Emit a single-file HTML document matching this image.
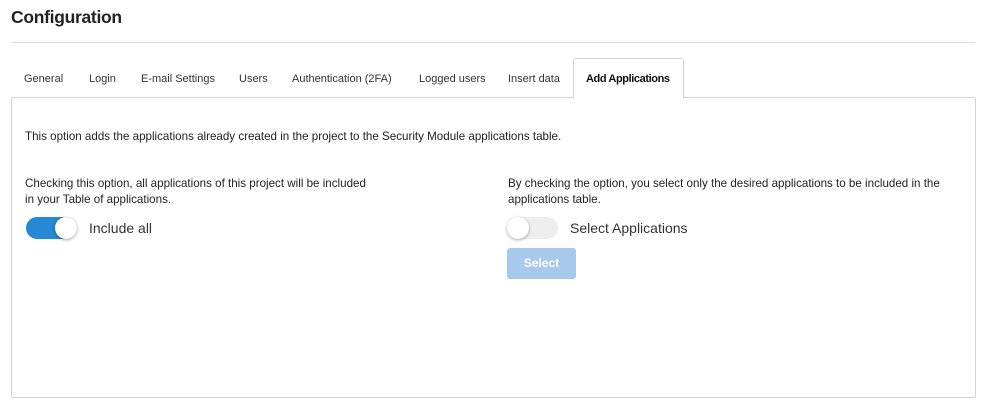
<!DOCTYPE html>
<html><head><meta charset="utf-8"><style>
body{margin:0;width:987px;height:406px;background:#fff;font-family:"Liberation Sans",sans-serif;color:#222;position:relative;overflow:hidden}
.a{position:absolute;white-space:nowrap}
.t{font-size:11px;top:73px;color:#333}
.p{font-size:11.6px;color:#222}
.tog{position:absolute;width:51px;height:22px;border-radius:11px}
.knob{position:absolute;top:0;width:22px;height:22px;border-radius:50%;background:#fff;box-shadow:0 1px 3px rgba(0,0,0,.35)}
</style></head><body>
<div class="a" style="left:11px;top:7px;font-size:17.5px;font-weight:bold;color:#222;letter-spacing:-0.3px">Configuration</div>
<div class="a" style="left:11px;top:42px;width:964px;height:1px;background:#ddd"></div>
<div class="a" style="left:11px;top:97px;width:963px;height:299px;border:1px solid #d4d4d4;border-radius:2px"></div>
<div class="a" style="left:573px;top:58px;width:109px;height:40px;border:1px solid #d4d4d4;border-bottom:none;background:#fff;border-radius:3px 3px 0 0"></div>
<div class="a t" style="left:24px">General</div>
<div class="a t" style="left:89px">Login</div>
<div class="a t" style="left:141px">E-mail Settings</div>
<div class="a t" style="left:239px">Users</div>
<div class="a t" style="left:292px">Authentication (2FA)</div>
<div class="a t" style="left:419px">Logged users</div>
<div class="a t" style="left:508px">Insert data</div>
<div class="a t" style="left:586px;font-weight:bold;color:#111;letter-spacing:-0.4px">Add Applications</div>
<div class="a p" style="left:25px;top:130px">This option adds the applications already created in the project to the Security Module applications table.</div>
<div class="a p" style="left:25px;top:177px">Checking this option, all applications of this project will be included</div>
<div class="a p" style="left:25px;top:193px">in your Table of applications.</div>
<div class="a p" style="left:508px;top:177px">By checking the option, you select only the desired applications to be included in the</div>
<div class="a p" style="left:508px;top:193px">applications table.</div>
<div class="tog" style="left:26px;top:217px;background:#2589d8"><div class="knob" style="left:29px"></div></div>
<div class="a" style="left:89px;top:220px;font-size:14px;color:#333">Include all</div>
<div class="tog" style="left:507px;top:217px;background:#eee"><div class="knob" style="left:0"></div></div>
<div class="a" style="left:570px;top:220px;font-size:14px;color:#333">Select Applications</div>
<div class="a" style="left:507px;top:248px;width:69px;height:31px;background:#a6c9ec;border-radius:3px;color:#fff;font-size:12px;font-weight:bold;text-align:center;line-height:31px">Select</div>
</body></html>
